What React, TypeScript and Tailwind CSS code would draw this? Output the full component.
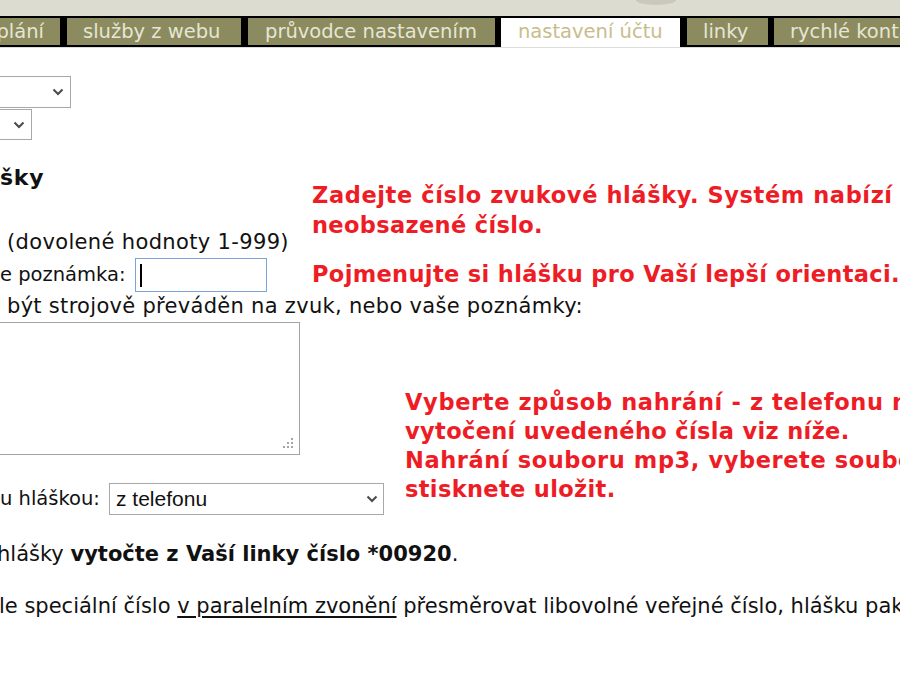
import React from "react";

function Chevron() {
  return (
    <svg width="12" height="8" viewBox="0 0 12 8" className="block">
      <path d="M1.5 1.5 L6 6 L10.5 1.5" fill="none" stroke="#4a4a4a" strokeWidth="2" />
    </svg>
  );
}

function Grip() {
  return (
    <svg width="14" height="14" viewBox="0 0 14 14" className="block">
      <rect x="10" y="1" width="2" height="2" fill="#a5a5a5" />
      <rect x="6" y="5" width="2" height="2" fill="#a5a5a5" />
      <rect x="10" y="5" width="2" height="2" fill="#a5a5a5" />
      <rect x="2" y="9" width="2" height="2" fill="#a5a5a5" />
      <rect x="6" y="9" width="2" height="2" fill="#a5a5a5" />
      <rect x="10" y="9" width="2" height="2" fill="#a5a5a5" />
    </svg>
  );
}

export default function App() {
  return (
    <div className="w-[900px] h-[700px] overflow-hidden bg-white text-[#111] font-['DejaVu_Sans',sans-serif] text-[19.5px] whitespace-nowrap">
      {/* top strip */}
      <div className="h-[16px] bg-[#dddcd0] flex items-start">
        <svg className="ml-[628px] block" width="56" height="7" viewBox="0 0 56 7">
          <ellipse cx="28" cy="0" rx="20" ry="5" fill="#c9c8bb" />
        </svg>
      </div>

      {/* tabs */}
      <div className="h-[31px] bg-black pt-[2px] flex items-start text-[19.5px]">
        <div className="w-[60px] h-[27px] shrink-0 bg-[#8b8b5f] text-[#e6e6d3] flex items-center justify-end pr-[16px]">
          plání
        </div>
        <div className="ml-[7px] w-[174px] h-[27px] shrink-0 bg-[#8b8b5f] text-[#e6e6d3] flex items-center pl-[16px]">
          služby z webu
        </div>
        <div className="ml-[7px] w-[247px] h-[27px] shrink-0 bg-[#8b8b5f] text-[#e6e6d3] flex items-center pl-[17px]">
          průvodce nastavením
        </div>
        <div className="ml-[6px] w-[179px] h-[29px] shrink-0 bg-white text-[#c8bc8c] flex items-center pl-[17px] pb-[2px]">
          nastavení účtu
        </div>
        <div className="ml-[7px] w-[81px] h-[27px] shrink-0 bg-[#8b8b5f] text-[#e6e6d3] flex items-center pl-[16px]">
          linky
        </div>
        <div className="ml-[6px] w-[200px] h-[27px] shrink-0 bg-[#8b8b5f] text-[#e6e6d3] flex items-center pl-[16px]">
          rychlé kontakty
        </div>
      </div>
      <div className="h-[1px] bg-[#dcdcdc]"></div>

      {/* selects at top */}
      <div className="mt-[28px] -ml-[10px] w-[81px] h-[32px] border-[1.5px] border-[#a8a8a8] flex items-center justify-end pr-[6px]">
        <Chevron />
      </div>
      <div className="mt-[1px] -ml-[10px] w-[42px] h-[31px] border-[1.5px] border-[#a8a8a8] flex items-center justify-end pr-[6px]">
        <Chevron />
      </div>

      {/* section A */}
      <div className="flex items-start">
        <div className="w-[312px] shrink-0">
          <div className="mt-[25px] leading-[26px] text-[22px] font-bold tracking-[0.7px]">šky</div>
          <div className="mt-[36px] leading-[31px] pl-[7px] text-[21px] tracking-[0.35px]">(dovolené hodnoty 1-999)</div>
          <div className="h-[34px] flex items-center">
            <span className="w-[135px] shrink-0">e poznámka:</span>
            <div className="w-[132px] h-[34px] border-[1.5px] border-[#78a4da] flex items-center">
              <div className="ml-[4px] w-[1.5px] h-[23px] bg-black"></div>
            </div>
          </div>
        </div>
        <div className="pt-[40px] text-[#ee1c25] font-bold text-[22.5px] tracking-[0.35px]">
          <p className="leading-[30px]">
            <span className="tracking-[0.6px]">Zadejte číslo zvukové hlášky. Systém nabízí</span>
            <br />
            neobsazené číslo.
          </p>
          <p className="mt-[19px] leading-[30px]">Pojmenujte si hlášku pro Vaší lepší orientaci.</p>
        </div>
      </div>

      <div className="leading-[29px] pl-[7px] text-[21px] tracking-[0.3px]">
        být strojově převáděn na zvuk, nebo vaše poznámky:
      </div>

      {/* section B */}
      <div className="flex items-start">
        <div className="w-[405px] shrink-0">
          <div className="mt-[1px] -ml-[10px] w-[310px] h-[133px] border-[1.5px] border-[#a3a3a3] flex items-end justify-end pr-[4px] pb-[3px]">
            <Grip />
          </div>
          <div className="mt-[28px] h-[32px] flex items-center">
            <span className="w-[109px] shrink-0">u hláškou:</span>
            <div className="w-[275px] h-[32px] border-[1.5px] border-[#a8a8a8] flex items-center pl-[6px] pr-[5px] font-['Liberation_Sans',Arial,sans-serif] text-[21px]">
              <span>z telefonu</span>
              <span className="ml-auto">
                <Chevron />
              </span>
            </div>
          </div>
        </div>
        <div className="pt-[67px] text-[#ee1c25] font-bold leading-[29px] text-[22.5px] tracking-[0.35px]">
          <div className="tracking-[0.65px]">Vyberte způsob nahrání - z telefonu nahrajete</div>
          <div>vytočení uvedeného čísla viz níže.</div>
          <div className="tracking-[0.6px]">Nahrání souboru mp3, vyberete soubor a</div>
          <div>stisknete uložit.</div>
        </div>
      </div>

      <div className="mt-[28px] leading-[23px] -ml-[3px] text-[21px]">
        hlášky <span className="font-bold">vytočte z Vaší linky číslo *00920</span>.
      </div>
      <div className="mt-[29px] leading-[23px] -ml-[1px] text-[21px]">
        le speciální číslo{" "}
        <a className="underline underline-offset-[3px] text-[#111]">v paralelním zvonění</a> přesměrovat libovolné
        veřejné číslo, hlášku pak přehrajete
      </div>
    </div>
  );
}
